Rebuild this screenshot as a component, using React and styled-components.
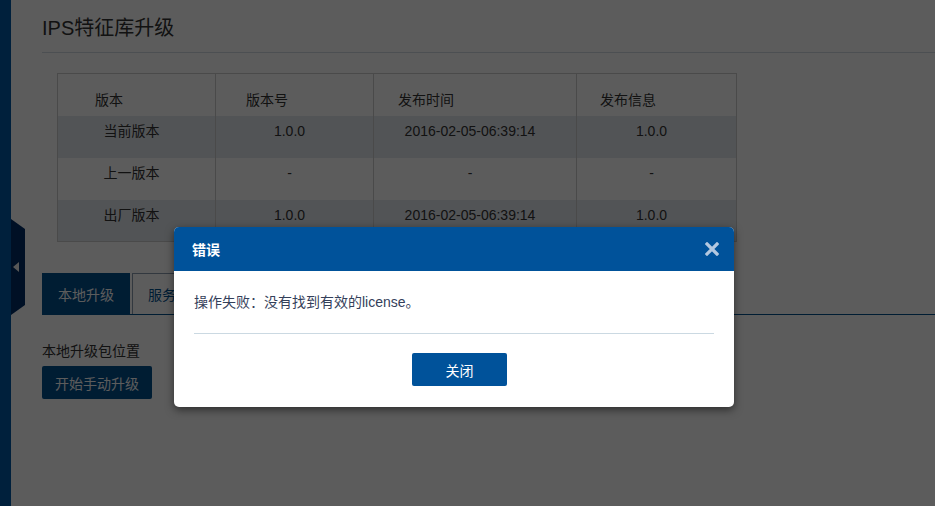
import React from "react";
import styled, { createGlobalStyle } from "styled-components";

const primary = "#00508f";

const GlobalStyle = createGlobalStyle`
  html, body {
    margin: 0;
    padding: 0;
    background: #fff;
    font-family: "Liberation Sans", "Noto Sans CJK SC", sans-serif;
    color: #333;
  }
`;

const Page = styled.div`
  position: relative;
  display: flex;
  width: 935px;
  height: 506px;
  overflow: hidden;
`;

const Sidebar = styled.aside`
  flex: 0 0 11px;
  background: #005aa6;
`;

const SideToggle = styled.div`
  position: absolute;
  left: 11px;
  top: 219px;
  width: 14px;
  height: 96px;
  background: #002e66;
  clip-path: polygon(0 0, 100% 10px, 100% 86px, 0 100%);
  display: flex;
  align-items: center;
  justify-content: center;

  &::after {
    content: "";
    width: 0;
    height: 0;
    border-top: 5px solid transparent;
    border-bottom: 5px solid transparent;
    border-right: 6px solid #f2f2f2;
    margin-left: -4px;
  }
`;

const Main = styled.main`
  flex: 1;
  padding-left: 31px;
`;

const Title = styled.h1`
  margin: 0;
  padding: 14px 0 10px;
  line-height: 28px;
  font-size: 20px;
  font-weight: normal;
  color: #333;
  border-bottom: 1px solid #d3dae2;
`;

const Table = styled.table`
  margin: 20px 0 0 15px;
  border-collapse: collapse;
  border: 1px solid #ccc;
  font-size: 14px;
  color: #333;
`;

const Th = styled.th`
  width: ${(p) => p.$w}px;
  height: 42px;
  box-sizing: border-box;
  padding: 16px 0 0 ${(p) => p.$pad}px;
  line-height: 20px;
  vertical-align: top;
  text-align: left;
  font-weight: normal;
  border-left: 1px solid #ccc;
`;

const Tr = styled.tr`
  background: ${(p) => (p.$striped ? "#e3e9ef" : "transparent")};
`;

const Td = styled.td`
  height: 42px;
  box-sizing: border-box;
  padding: 5px 10px 0 0;
  line-height: 20px;
  vertical-align: top;
  text-align: center;
  border-left: 1px solid #ccc;
`;

const Tabs = styled.div`
  display: flex;
  gap: 2px;
  margin-top: 31px;
  border-bottom: 1px solid ${primary};
`;

const Tab = styled.div`
  height: 41px;
  box-sizing: border-box;
  padding: 0 ${(p) => (p.$active ? 16 : 15)}px;
  display: flex;
  align-items: center;
  font-size: 14px;
  background: ${(p) => (p.$active ? primary : "#fff")};
  color: ${(p) => (p.$active ? "#fff" : primary)};
  border: ${(p) => (p.$active ? "none" : "1px solid #8a9bb0")};
  border-bottom: none;
`;

const Label = styled.div`
  margin-top: 28px;
  font-size: 14px;
  line-height: 16px;
  color: #333;
`;

const Button = styled.button`
  display: block;
  height: 33px;
  padding: 0 13px;
  border: none;
  border-radius: 2px;
  background: ${(p) => p.$bg || primary};
  color: #fff;
  font-family: inherit;
  font-size: 14px;
  cursor: pointer;
`;

const StartButton = styled(Button)`
  margin-top: 7px;
  width: 110px;
`;

const CloseButton = styled(Button)`
  width: 95px;
`;

const Backdrop = styled.div`
  position: absolute;
  inset: 0;
  background: rgba(0, 0, 0, 0.64);
`;

const Dialog = styled.div`
  position: absolute;
  left: 174px;
  top: 227px;
  width: 560px;
  background: #fff;
  border-radius: 5px;
  overflow: hidden;
  box-shadow: 0 3px 9px rgba(0, 0, 0, 0.5);
`;

const DialogHeader = styled.div`
  height: 44px;
  padding: 0 15px 0 18px;
  display: flex;
  align-items: center;
  justify-content: space-between;
  background: #00529a;
  color: #fff;
`;

const DialogTitle = styled.span`
  font-size: 14px;
  font-weight: bold;
`;

const CloseIcon = styled.svg`
  width: 14px;
  height: 14px;
  display: block;
`;

const DialogBody = styled.div`
  padding: 21px 20px 0;
  font-size: 14px;
  line-height: 20px;
  color: #34405a;
`;

const Divider = styled.div`
  margin: 21px 20px 0;
  height: 1px;
  background: #cbd9e2;
`;

const DialogFooter = styled.div`
  display: flex;
  justify-content: center;
  padding: 19px 0 21px 11px;
`;

const columns = [
  { label: "版本", w: 158, pad: 37 },
  { label: "版本号", w: 158, pad: 30 },
  { label: "发布时间", w: 203, pad: 24 },
  { label: "发布信息", w: 160, pad: 23 },
];

const rows = [
  ["当前版本", "1.0.0", "2016-02-05-06:39:14", "1.0.0"],
  ["上一版本", "-", "-", "-"],
  ["出厂版本", "1.0.0", "2016-02-05-06:39:14", "1.0.0"],
];

export default function App() {
  return (
    <>
      <GlobalStyle />
      <Page>
        <Sidebar />
        <SideToggle />
        <Main>
          <Title>IPS特征库升级</Title>
          <Table>
            <thead>
              <tr>
                {columns.map((c) => (
                  <Th key={c.label} $w={c.w} $pad={c.pad}>
                    {c.label}
                  </Th>
                ))}
              </tr>
            </thead>
            <tbody>
              {rows.map((r, i) => (
                <Tr key={r[0]} $striped={i % 2 === 0}>
                  {r.map((cell, j) => (
                    <Td key={j}>{cell}</Td>
                  ))}
                </Tr>
              ))}
            </tbody>
          </Table>
          <Tabs>
            <Tab $active>本地升级</Tab>
            <Tab>服务器升级</Tab>
          </Tabs>
          <Label>本地升级包位置</Label>
          <StartButton>开始手动升级</StartButton>
        </Main>
        <Backdrop />
        <Dialog>
          <DialogHeader>
            <DialogTitle>错误</DialogTitle>
            <CloseIcon viewBox="0 0 14 14">
              <path
                d="M2 2 L12 12 M12 2 L2 12"
                stroke="#b3c8e0"
                strokeWidth="3.2"
                strokeLinecap="square"
              />
            </CloseIcon>
          </DialogHeader>
          <DialogBody>操作失败：没有找到有效的license。</DialogBody>
          <Divider />
          <DialogFooter>
            <CloseButton $bg="#00529a">关闭</CloseButton>
          </DialogFooter>
        </Dialog>
      </Page>
    </>
  );
}
